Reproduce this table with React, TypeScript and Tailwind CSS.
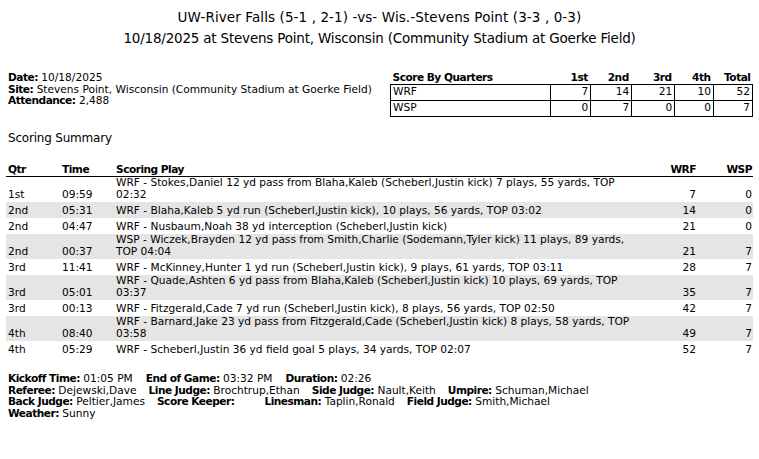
import React from "react";

const plays: [string, string, string, string, string][] = [
  ["1st", "09:59", "WRF - Stokes,Daniel 12 yd pass from Blaha,Kaleb (Scheberl,Justin kick) 7 plays, 55 yards, TOP 02:32", "7", "0"],
  ["2nd", "05:31", "WRF - Blaha,Kaleb 5 yd run (Scheberl,Justin kick), 10 plays, 56 yards, TOP 03:02", "14", "0"],
  ["2nd", "04:47", "WRF - Nusbaum,Noah 38 yd interception (Scheberl,Justin kick)", "21", "0"],
  ["2nd", "00:37", "WSP - Wiczek,Brayden 12 yd pass from Smith,Charlie (Sodemann,Tyler kick) 11 plays, 89 yards, TOP 04:04", "21", "7"],
  ["3rd", "11:41", "WRF - McKinney,Hunter 1 yd run (Scheberl,Justin kick), 9 plays, 61 yards, TOP 03:11", "28", "7"],
  ["3rd", "05:01", "WRF - Quade,Ashten 6 yd pass from Blaha,Kaleb (Scheberl,Justin kick) 10 plays, 69 yards, TOP 03:37", "35", "7"],
  ["3rd", "00:13", "WRF - Fitzgerald,Cade 7 yd run (Scheberl,Justin kick), 8 plays, 56 yards, TOP 02:50", "42", "7"],
  ["4th", "08:40", "WRF - Barnard,Jake 23 yd pass from Fitzgerald,Cade (Scheberl,Justin kick) 8 plays, 58 yards, TOP 03:58", "49", "7"],
  ["4th", "05:29", "WRF - Scheberl,Justin 36 yd field goal 5 plays, 34 yards, TOP 02:07", "52", "7"],
];

const quarters: [string, string[]][] = [
  ["WRF", ["7", "14", "21", "10", "52"]],
  ["WSP", ["0", "7", "0", "0", "7"]],
];

function L({ label, value }: { label: string; value: string }) {
  return (
    <span>
      <b className="font-bold tracking-[-0.5px]">{label}</b> {value}
    </span>
  );
}

export default function App() {
  return (
    <div className="w-[759px] h-[459px] bg-white text-black font-['DejaVu_Sans',Verdana,sans-serif] px-[6px] overflow-hidden">
      <div className="pt-[7px] text-center text-[13.5px] leading-[21px] tracking-[-0.2px]">
        <div className="tracking-[0.1px]">UW-River Falls (5-1 , 2-1) -vs- Wis.-Stevens Point (3-3 , 0-3)</div>
        <div>10/18/2025 at Stevens Point, Wisconsin (Community Stadium at Goerke Field)</div>
      </div>

      <div className="mt-[21px] flex justify-between items-start text-[10.6px] leading-[11.5px]">
        <div className="pl-[2px] pt-[2px]">
          <div><L label="Date:" value="10/18/2025" /></div>
          <div><L label="Site:" value="Stevens Point, Wisconsin (Community Stadium at Goerke Field)" /></div>
          <div><L label="Attendance:" value="2,488" /></div>
        </div>
        <table className="border-collapse w-[363px] mt-[1px]">
          <thead>
            <tr className="h-[13px] tracking-[-0.5px]">
              <th className="text-left pl-[2px] font-bold w-[161px] align-bottom">Score By Quarters</th>
              <th className="text-right pr-[3px] font-bold w-[40px] align-bottom">1st</th>
              <th className="text-right pr-[3px] font-bold w-[41px] align-bottom">2nd</th>
              <th className="text-right pr-[3px] font-bold w-[43px] align-bottom">3rd</th>
              <th className="text-right pr-[3px] font-bold w-[39px] align-bottom">4th</th>
              <th className="text-right pr-[2px] font-bold w-[39px] align-bottom">Total</th>
            </tr>
          </thead>
          <tbody>
            {quarters.map(([team, vals]) => (
              <tr key={team} className="h-[16px]">
                <td className="border border-black pl-[2px] text-left">{team}</td>
                {vals.map((v, i) => (
                  <td key={i} className="border border-black text-right pr-[2px]">{v}</td>
                ))}
              </tr>
            ))}
          </tbody>
        </table>
      </div>

      <div className="mt-[13px] pl-[2px] text-[12px] leading-[16px] tracking-[-0.2px]">Scoring Summary</div>

      <table className="mt-[18px] w-[747px] border-collapse text-[10.6px] leading-[11.5px]">
        <thead>
          <tr className="border-b border-black tracking-[-0.5px]">
            <th className="w-[54px] text-left pl-[2px] pb-[1px] font-bold">Qtr</th>
            <th className="w-[54px] text-left pl-[2px] pb-[1px] font-bold">Time</th>
            <th className="w-[526px] text-left pl-[2px] pb-[1px] font-bold">Scoring Play</th>
            <th className="w-[60px] text-right pr-[4px] pb-[1px] font-bold">WRF</th>
            <th className="w-[53px] text-right pr-[1px] pb-[1px] font-bold">WSP</th>
          </tr>
        </thead>
        <tbody>
          {plays.map(([q, t, play, a, b], i) => (
            <tr key={i} className={i % 2 === 1 ? "bg-[#e5e5e5] h-[16px]" : "bg-white h-[16px]"}>
              <td className="align-bottom pl-[2px] pb-[2px]">{q}</td>
              <td className="align-bottom pl-[2px] pb-[2px]">{t}</td>
              <td className="align-bottom pl-[2px] pr-[4px] pb-[2px]">{play}</td>
              <td className="align-bottom text-right pr-[4px] pb-[2px]">{a}</td>
              <td className="align-bottom text-right pr-[1px] pb-[2px]">{b}</td>
            </tr>
          ))}
        </tbody>
      </table>

      <div className="mt-[16px] pl-[2px] text-[10.6px] leading-[11.7px]">
        <div className="flex gap-[13px]">
          <L label="Kickoff Time:" value="01:05 PM" />
          <L label="End of Game:" value="03:32 PM" />
          <L label="Duration:" value="02:26" />
        </div>
        <div className="flex gap-[12px]">
          <L label="Referee:" value="Dejewski,Dave" />
          <L label="Line Judge:" value="Brochtrup,Ethan" />
          <L label="Side Judge:" value="Nault,Keith" />
          <L label="Umpire:" value="Schuman,Michael" />
        </div>
        <div className="flex gap-[12px]">
          <L label="Back Judge:" value="Peltier,James" />
          <span className="pr-[18px]"><b className="font-bold tracking-[-0.5px]">Score Keeper:</b></span>
          <L label="Linesman:" value="Taplin,Ronald" />
          <L label="Field Judge:" value="Smith,Michael" />
        </div>
        <div>
          <L label="Weather:" value="Sunny" />
        </div>
      </div>
    </div>
  );
}
